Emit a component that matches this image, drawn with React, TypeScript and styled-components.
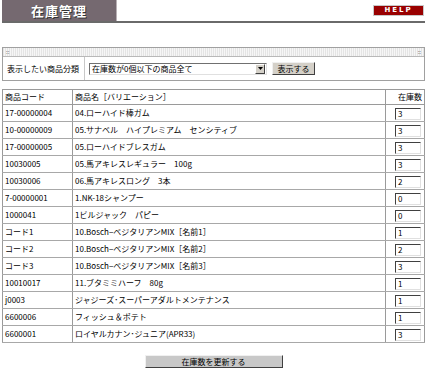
import { createGlobalStyle, styled } from "styled-components";

const rows = [
  { code: "17-00000004", name: "04.ローハイド棒ガム", stock: "3" },
  { code: "10-00000009", name: "05.サナベル　ハイプレミアム　センシティブ", stock: "3" },
  { code: "17-00000005", name: "05.ローハイドブレスガム", stock: "3" },
  { code: "10030005", name: "05.馬アキレスレギュラー　100g", stock: "3" },
  { code: "10030006", name: "06.馬アキレスロング　3本", stock: "2" },
  { code: "7-00000001", name: "1.NK-18シャンプー", stock: "0" },
  { code: "1000041", name: "1ビルジャック　パピー", stock: "0" },
  { code: "コード1", name: "10.Bosch−ベジタリアンMIX［名前1］", stock: "1" },
  { code: "コード2", name: "10.Bosch−ベジタリアンMIX［名前2］", stock: "2" },
  { code: "コード3", name: "10.Bosch−ベジタリアンMIX［名前3］", stock: "3" },
  { code: "10010017", name: "11.ブタミミハーフ　80g", stock: "1" },
  { code: "j0003", name: "ジャジーズ･スーパーアダルトメンテナンス", stock: "1" },
  { code: "6600006", name: "フィッシュ＆ポテト", stock: "1" },
  { code: "6600001", name: "ロイヤルカナン･ジュニア(APR33)", stock: "3" },
];

const GlobalStyle = createGlobalStyle`
  body {
    margin: 0;
    background: #ffffff;
    font-family: "Noto Sans CJK JP", "DejaVu Sans", sans-serif;
    font-size: 8px;
    color: #000;
  }
`;

export default function App() {
  return (
    <Page>
      <GlobalStyle />
      <Header>
        <Title>在庫管理</Title>
        <HelpButton>HELP</HelpButton>
      </Header>

      <Panel>
        <PanelStrip>
          <span>::</span>
          <span>::</span>
        </PanelStrip>
        <FilterRow>
          <FilterLabel>表示したい商品分類</FilterLabel>
          <Select>
            <span>在庫数が0個以下の商品全て</span>
            <SelectArrow>
              <svg width="5" height="3" viewBox="0 0 5 3">
                <path d="M0 0h5L2.5 3z" fill="#000" />
              </svg>
            </SelectArrow>
          </Select>
          <GrayButton>表示する</GrayButton>
        </FilterRow>
      </Panel>

      <StockTable>
        <colgroup>
          <col style={{ width: 70 }} />
          <col />
          <col style={{ width: 39 }} />
        </colgroup>
        <thead>
          <tr>
            <HeadCell>商品コード</HeadCell>
            <HeadCell>商品名［バリエーション］</HeadCell>
            <HeadCell $right>在庫数</HeadCell>
          </tr>
        </thead>
        <tbody>
          {rows.map((r) => (
            <tr key={r.code}>
              <Cell>{r.code}</Cell>
              <Cell>{r.name}</Cell>
              <Cell $center>
                <StockInput>{r.stock}</StockInput>
              </Cell>
            </tr>
          ))}
        </tbody>
      </StockTable>

      <Footer>
        <UpdateButton>在庫数を更新する</UpdateButton>
      </Footer>
    </Page>
  );
}

const Page = styled.div`
  padding: 0 4px 0 2px;
  width: 423px;
`;

const Header = styled.div`
  display: flex;
  justify-content: space-between;
  align-items: flex-start;
  height: 21px;
  border-bottom: 2px solid #6a6a6a;
`;

const Title = styled.div`
  width: 114px;
  height: 21px;
  background: #756970;
  border-right: 1px solid #b8b0b4;
  color: #ffffff;
  font-size: 13px;
  font-weight: bold;
  line-height: 21px;
  text-align: center;
  letter-spacing: 1px;
  text-shadow: 1px 1px 0 #333;
`;

const HelpButton = styled.div`
  margin-top: 5px;
  margin-right: 1px;
  width: 49px;
  height: 9px;
  background: #990000;
  border: 1px solid #c8c8c8;
  color: #ffffff;
  font-family: "DejaVu Sans", sans-serif;
  font-size: 7px;
  font-weight: bold;
  letter-spacing: 2px;
  line-height: 9px;
  text-align: center;
`;

const Panel = styled.div`
  margin-top: 24px;
  border: 1px solid #a0a0a0;
`;

const PanelStrip = styled.div`
  display: flex;
  justify-content: space-between;
  height: 8px;
  padding: 0 3px;
  background: repeating-linear-gradient(90deg, #e4e4e4 0 1px, #f6f6f6 1px 2px);
  border-bottom: 1px solid #b8b8b8;
  font-size: 6px;
  line-height: 8px;
  color: #555;
`;

const FilterRow = styled.div`
  display: flex;
  align-items: center;
  height: 23px;
`;

const FilterLabel = styled.div`
  width: 77px;
  padding-left: 4px;
  height: 23px;
  line-height: 23px;
  border-right: 1px solid #c8c8c8;
`;

const Select = styled.div`
  display: flex;
  align-items: center;
  justify-content: space-between;
  margin-left: 4px;
  width: 174px;
  height: 10px;
  padding-left: 2px;
  background: #fff;
  border-top: 1px solid #707070;
  border-left: 1px solid #707070;
  border-bottom: 1px solid #e0e0e0;
  border-right: 1px solid #e0e0e0;
  line-height: 10px;
`;

const SelectArrow = styled.div`
  display: flex;
  align-items: center;
  justify-content: center;
  width: 8px;
  height: 8px;
  margin-right: 1px;
  background: #d4d0c8;
  border: 1px solid;
  border-color: #fff #404040 #404040 #fff;
`;

const GrayButton = styled.div`
  margin-left: 5px;
  width: 41px;
  height: 11px;
  background: #d4d0c8;
  border: 1px solid;
  border-color: #f0f0f0 #404040 #404040 #f0f0f0;
  line-height: 11px;
  text-align: center;
`;

const StockTable = styled.table`
  margin-top: 8px;
  width: 423px;
  border-collapse: collapse;
  border: 1px solid #9a9a9a;
  table-layout: fixed;
`;

const HeadCell = styled.th<{ $right?: boolean }>`
  height: 14px;
  padding: 0 2px;
  border: 1px solid #9a9a9a;
  font-weight: normal;
  text-align: ${({ $right }) => ($right ? "right" : "left")};
  line-height: 14px;
`;

const Cell = styled.td<{ $center?: boolean }>`
  height: 16px;
  padding: 0 2px;
  border-bottom: 1px solid #a8a8a8;
  border-left: 1px solid #9a9a9a;
  border-right: 1px solid #9a9a9a;
  white-space: nowrap;
  overflow: hidden;
  text-align: ${({ $center }) => ($center ? "center" : "left")};
  line-height: 16px;
`;

const StockInput = styled.div`
  display: inline-block;
  vertical-align: middle;
  width: 22px;
  height: 10px;
  padding-left: 2px;
  background: #fff;
  border: 1px solid;
  border-color: #404040 #e0e0e0 #e0e0e0 #404040;
  line-height: 10px;
  text-align: left;
  margin-left: 6px;
`;

const Footer = styled.div`
  display: flex;
  justify-content: center;
  margin-top: 12px;
`;

const UpdateButton = styled.div`
  width: 136px;
  height: 11px;
  background: #c8c8c8;
  border: 1px solid;
  border-color: #f0f0f0 #404040 #404040 #f0f0f0;
  line-height: 11px;
  text-align: center;
`;
